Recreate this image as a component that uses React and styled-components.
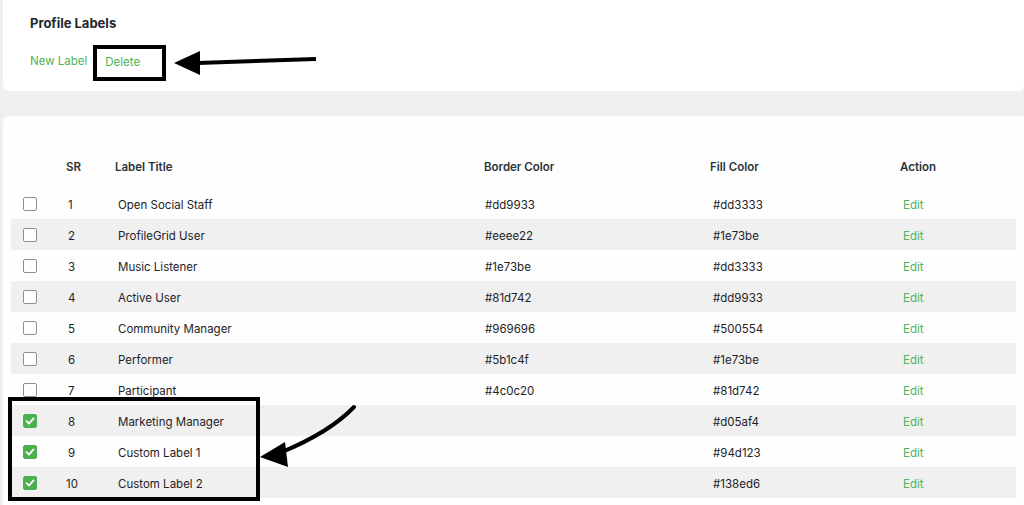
import styled, { createGlobalStyle } from "styled-components";

const GlobalStyle = createGlobalStyle`
  body {
    margin: 0;
    background: #f0f0f1;
    font-family: Inter, "Noto Sans", "Liberation Sans", sans-serif;
    color: #1d2327;
  }
`;

const labels = [
  { sr: 1, title: "Open Social Staff", border: "#dd9933", fill: "#dd3333" },
  { sr: 2, title: "ProfileGrid User", border: "#eeee22", fill: "#1e73be" },
  { sr: 3, title: "Music Listener", border: "#1e73be", fill: "#dd3333" },
  { sr: 4, title: "Active User", border: "#81d742", fill: "#dd9933" },
  { sr: 5, title: "Community Manager", border: "#969696", fill: "#500554" },
  { sr: 6, title: "Performer", border: "#5b1c4f", fill: "#1e73be" },
  { sr: 7, title: "Participant", border: "#4c0c20", fill: "#81d742" },
  { sr: 8, title: "Marketing Manager", border: "", fill: "#d05af4", checked: true },
  { sr: 9, title: "Custom Label 1", border: "", fill: "#94d123", checked: true },
  { sr: 10, title: "Custom Label 2", border: "", fill: "#138ed6", checked: true },
];

const Page = styled.div`
  position: relative;
  height: 505px;
  overflow: hidden;
`;

const TopCard = styled.div`
  margin-left: 3px;
  height: 91px;
  box-sizing: border-box;
  padding: 14px 27px 0;
  background: #fff;
  border-radius: 0 0 6px 6px;
`;

const Title = styled.h2`
  margin: 0;
  font-size: 13px;
  line-height: 18px;
  font-weight: 700;
  color: #23282d;
`;

const Actions = styled.div`
  display: flex;
  gap: 18px;
  margin-top: 20px;
`;

const TextLink = styled.a`
  font-size: 11.5px;
  line-height: 18px;
  color: #4fb35a;
  text-decoration: none;
  cursor: pointer;
  margin-top: ${(p) => (p.$drop ? "1px" : "0")};
`;

const TableCard = styled.div`
  margin: 25px 0 0 3px;
  padding: 28px 8px 0;
  background: #fefefe;
  border-radius: 6px 0 0 0;
  min-height: 400px;
`;

const Row = styled.div`
  display: grid;
  grid-template-columns: 55px 49px 369px 226px 190px 1fr;
  align-items: center;
  height: ${(p) => (p.$head ? "44px" : "31px")};
  font-size: 11.5px;
  background: ${(p) => (p.$striped ? "#f0f0f0" : "transparent")};
`;

const HeadCell = styled.div`
  padding-top: 2px;
  font-weight: 600;
  color: #2c3338;
`;

const Cell = styled.div`
  padding: 2px 0 0 ${(p) => p.$pad || "3px"};
  color: #1d2327;
`;

const CheckCell = styled.div`
  padding-left: 12px;
  display: flex;
  align-items: center;
`;

const Box = styled.span`
  width: 14px;
  height: 14px;
  box-sizing: border-box;
  border-radius: 2px;
  border: 1px solid ${(p) => (p.$checked ? "#4caf50" : "#8c8f94")};
  background: ${(p) => (p.$checked ? "#4caf50" : "#fff")};
  display: flex;
  align-items: center;
  justify-content: center;
`;

const EditLink = styled(TextLink)`
  padding: 2px 0 0 3px;
`;

const Frame = styled.div`
  position: absolute;
  border: 4px solid #000;
  box-sizing: border-box;
  pointer-events: none;
`;

const Arrow = styled.svg`
  position: absolute;
  pointer-events: none;
  overflow: visible;
`;

const Checkbox = ({ checked }) => (
  <Box $checked={checked}>
    {checked && (
      <svg width="10" height="10" viewBox="0 0 10 10">
        <polyline
          points="1.5,5.2 4,7.6 8.5,2.4"
          fill="none"
          stroke="#fff"
          strokeWidth="1.8"
          strokeLinecap="round"
          strokeLinejoin="round"
        />
      </svg>
    )}
  </Box>
);

const App = () => {
  return (
    <>
      <GlobalStyle />
      <Page>
        <TopCard>
          <Title>Profile Labels</Title>
          <Actions>
            <TextLink>New Label</TextLink>
            <TextLink $drop>Delete</TextLink>
          </Actions>
        </TopCard>

        <TableCard>
          <Row $head>
            <div />
            <HeadCell>SR</HeadCell>
            <HeadCell>Label Title</HeadCell>
            <HeadCell>Border Color</HeadCell>
            <HeadCell>Fill Color</HeadCell>
            <HeadCell>Action</HeadCell>
          </Row>
          {labels.map((label, i) => (
            <Row key={label.sr} $striped={i % 2 === 1}>
              <CheckCell>
                <Checkbox checked={label.checked} />
              </CheckCell>
              <Cell $pad={label.sr > 9 ? "0" : "2px"}>{label.sr}</Cell>
              <Cell>{label.title}</Cell>
              <Cell $pad="1px">{label.border}</Cell>
              <Cell>{label.fill}</Cell>
              <EditLink>Edit</EditLink>
            </Row>
          ))}
        </TableCard>

        {/* annotations drawn over the screenshot */}
        <Frame style={{ left: 93, top: 45, width: 73, height: 36 }} />
        <Arrow style={{ left: 0, top: 0 }} width="1" height="1">
          <path d="M198 63 L316 59" stroke="#000" strokeWidth="4" fill="none" />
          <polygon points="174,63 200,51 200,75" fill="#000" />
        </Arrow>
        <Frame style={{ left: 8, top: 397, width: 252, height: 104 }} />
        <Arrow style={{ left: 0, top: 0 }} width="1" height="1">
          <path
            d="M354 407 Q330 432 282 452"
            stroke="#000"
            strokeWidth="4"
            fill="none"
            strokeLinecap="round"
          />
          <polygon points="260,457 285,442 288,467" fill="#000" />
        </Arrow>
      </Page>
    </>
  );
};

export default App;
